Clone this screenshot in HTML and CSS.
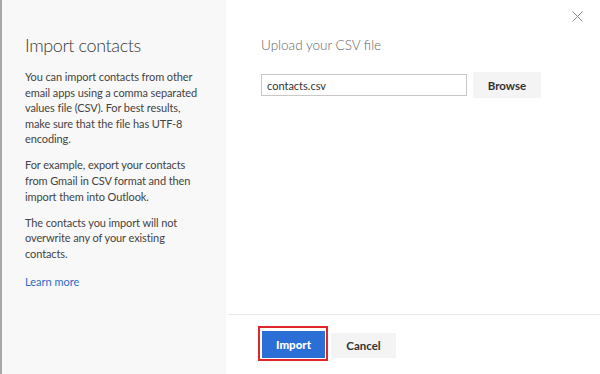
FILE: index.html
```html
<!DOCTYPE html>
<html lang="en">
<head>
    <meta charset="UTF-8">
    <meta name="viewport" content="width=device-width, initial-scale=1.0">
    <title>Import contacts</title>
    <link rel="stylesheet" href="styles.css">
</head>
<body>
    <div class="dialog">
        <div class="side">
            <h1>Import contacts</h1>
            <p>You can import contacts from other email apps using a comma separated values file (CSV). For best results, make sure that the file has UTF-8 encoding.</p>
            <p>For example, export your contacts from Gmail in CSV format and then import them into Outlook.</p>
            <p>The contacts you import will not overwrite any of your existing contacts.</p>
            <a class="learn" href="#">Learn more</a>
        </div>

        <div class="main">
            <button class="close" aria-label="Close">
                <svg width="11" height="11" viewBox="0 0 11 11">
                    <path d="M0.5 0.5 L10.5 10.5 M10.5 0.5 L0.5 10.5" stroke="#8a8a8a" stroke-width="1" fill="none"/>
                </svg>
            </button>
            <div class="main-body">
                <div class="upload-title">Upload your CSV file</div>
                <div class="file-row">
                    <input class="file-input" type="text" value="contacts.csv">
                    <button class="btn">Browse</button>
                </div>
            </div>
            <div class="footer">
                <span class="highlight"><button class="btn btn-primary">Import</button></span>
                <button class="btn btn-cancel">Cancel</button>
            </div>
        </div>
    </div>
</body>
</html>
```

FILE: styles.css
```css
body {
    margin: 0;
    font-family: "Lato", "Open Sans", sans-serif;
    background: #ffffff;
    color: #333333;
}
.dialog {
    display: flex;
    height: 374px;
}
.side {
    width: 174px;
    padding: 0 27px 0 23px;
    background: #f8f8f8;
    border-left: 2px solid #a8a8a8;
}
.side h1 {
    margin: 30px 0 9px 0;
    font-size: 18px;
    font-weight: 300;
    color: #3a3a3a;
    line-height: 30px;
    letter-spacing: -0.4px;
}
.side p {
    margin: 0 0 10.5px 0;
    font-size: 11px;
    line-height: 15.6px;
    letter-spacing: -0.1px;
    color: #444444;
}
.learn {
    display: block;
    margin-top: 13px;
    font-size: 11px;
    color: #2b6cc4;
    text-decoration: none;
}
.main {
    flex: 1;
    display: flex;
    flex-direction: column;
    position: relative;
}
.close {
    position: absolute;
    top: 10px;
    right: 17px;
    background: none;
    border: none;
    padding: 0;
    cursor: pointer;
}
.main-body {
    flex: 1;
    padding: 37px 0 0 35px;
}
.upload-title {
    font-size: 13.5px;
    font-weight: 300;
    color: #666666;
}
.file-row {
    display: flex;
    align-items: center;
    gap: 6px;
    margin-top: 19px;
}
.file-input {
    width: 194px;
    height: 20px;
    padding: 0 5px;
    border: 1px solid #c8c8c8;
    font-family: inherit;
    font-size: 11px;
    color: #333333;
    outline: none;
}
.btn {
    height: 26px;
    padding: 0 12px;
    background: #f4f4f4;
    border: none;
    font-family: "Lato", "Open Sans", sans-serif;
    font-size: 11.5px;
    font-weight: 700;
    color: #333333;
    cursor: pointer;
}
.file-row .btn {
    width: 68px;
}
.footer {
    height: 59px;
    border-top: 1px solid #e8e8e8;
    margin-left: 2px;
    display: flex;
    align-items: center;
    gap: 3px;
    padding-left: 30px;
}
.highlight {
    display: flex;
    padding: 3px 1px 1px 2px;
    border: 2px solid #e0262a;
    margin-top: -3px;
}
.btn-primary {
    width: 63px;
    height: 27px;
    background: #2b6fd6;
    color: #ffffff;
    font-weight: 900;
}
.btn-cancel {
    width: 65px;
    height: 25px;
    margin-top: 1px;
}
```
